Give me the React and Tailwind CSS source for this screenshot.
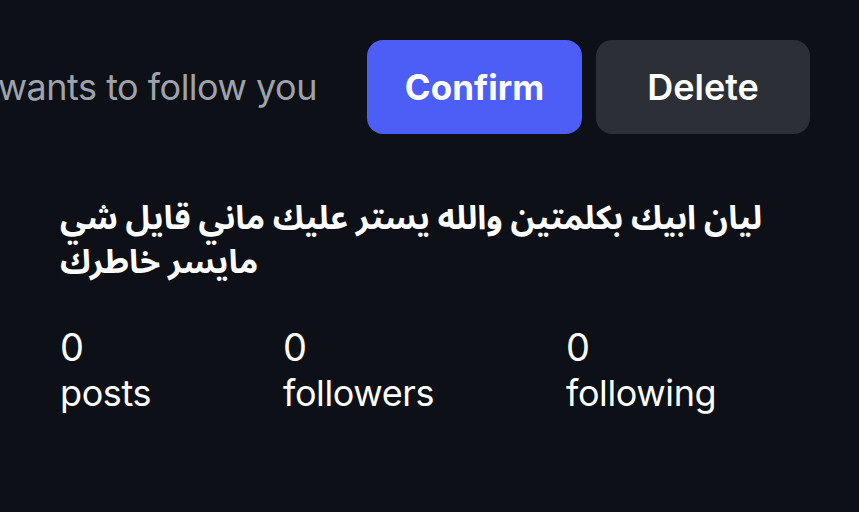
export default function App() {
    const stats = [
        { count: 0, label: "posts" },
        { count: 0, label: "followers" },
        { count: 0, label: "following" },
    ];

    return (
        <div
            className="w-[859px] h-[512px] bg-[#0d1016] overflow-hidden"
            style={{ fontFamily: "Inter, 'Noto Sans Arabic', 'DejaVu Sans', sans-serif" }}
        >
            {/* Request row */}
            <div className="flex items-center pt-[40px] pr-[49px]">
                <div className="flex-1 min-w-0 flex justify-end overflow-hidden pr-[50px]">
                    <span className="whitespace-nowrap text-[36px] tracking-[-0.5px] text-[#9ea3ab]">
                        wants to follow you
                    </span>
                </div>
                <div className="flex gap-[14px]">
                    <button className="w-[215px] h-[94px] rounded-[16px] bg-[#4c5ef5] text-white text-[35px] font-bold">
                        Confirm
                    </button>
                    <button className="w-[214px] h-[94px] rounded-[16px] bg-[#2c2f35] text-white text-[36px] font-semibold">
                        Delete
                    </button>
                </div>
            </div>

            {/* Bio */}
            <div className="px-[60px] pt-[61px]">
                <p className="text-[33px] font-bold leading-[44px] text-white max-w-[740px]">
                    ليان ابيك بكلمتين والله يستر عليك ماني قايل شي مايسر خاطرك
                </p>
            </div>

            {/* Stats */}
            <div className="flex gap-[132px] px-[60px] pt-[41px]">
                {stats.map((s) => (
                    <div key={s.label} className="flex flex-col text-white">
                        <span className="text-[38px] leading-[46px]">{s.count}</span>
                        <span className="text-[36px] leading-[46px] tracking-[-0.4px]">{s.label}</span>
                    </div>
                ))}
            </div>
        </div>
    );
}
